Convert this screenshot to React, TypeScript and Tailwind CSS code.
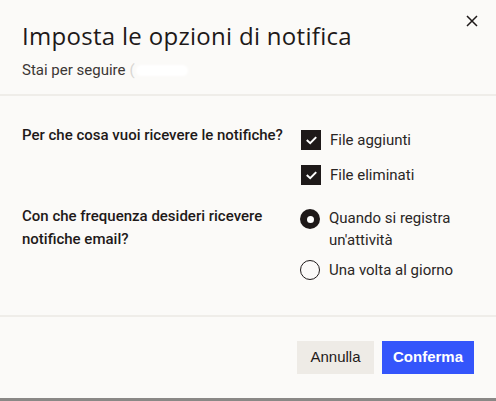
import React from "react";

function Check() {
  return (
    <span className="flex h-[20px] w-[20px] shrink-0 items-center justify-center bg-[#1e1919]">
      <svg width="11" height="9" viewBox="0 0 11 9" fill="none">
        <path d="M1.5 4.6L4.2 7.2L9.5 1.8" stroke="#ffffff" strokeWidth="2" strokeLinecap="square" />
      </svg>
    </span>
  );
}

export default function App() {
  return (
    <div className="w-[496px] h-[401px] bg-[#8a8886] overflow-hidden" style={{ fontFamily: '"Liberation Sans", Arial, sans-serif' }}>
      <div className="relative flex h-[398px] flex-col bg-[#fbfaf8] text-[#1e1919]">
        <button className="absolute right-[17px] top-[14px] flex h-[14px] w-[14px] items-center justify-center">
          <svg width="12" height="12" viewBox="0 0 12 12" fill="none">
            <path d="M1 1L11 11M11 1L1 11" stroke="#1e1919" strokeWidth="1.5" />
          </svg>
        </button>
        <div className="h-[96px] shrink-0 border-b-2 border-[#efede9] px-[22px] pt-[21px]">
          <h1 className="text-[24px] leading-[30px] tracking-[0.3px]" style={{ fontFamily: '"Open Sans", sans-serif' }}>
            Imposta le opzioni di notifica
          </h1>
          <div className="mt-[10px] flex items-center text-[15px] leading-[18px] text-[#3b3735]" style={{ fontFamily: 'Roboto, sans-serif' }}>
            <span>Stai per seguire</span>
            <span className="ml-[4px] text-[#d8d6d3]">(</span>
            <span className="ml-[1px] h-[11px] w-[52px] rounded-full bg-white blur-[1px]" />
          </div>
        </div>
        <div className="h-[221px] shrink-0 border-b-2 border-[#efede9] px-[22px] pt-[28px]" style={{ fontFamily: 'Roboto, sans-serif' }}>
          <div className="grid grid-cols-[278px_1fr]">
            <div className="text-[15px] font-medium leading-[22px]">Per che cosa vuoi ricevere le notifiche?</div>
            <div className="flex flex-col gap-[15px] pt-[6px] pl-[1px]">
              <label className="flex items-center gap-[9px] text-[15px] leading-[20px] text-[#2a2625]">
                <Check />
                <span>File aggiunti</span>
              </label>
              <label className="flex items-center gap-[9px] text-[15px] leading-[20px] text-[#2a2625]">
                <Check />
                <span>File eliminati</span>
              </label>
            </div>
          </div>
          <div className="mt-[20px] grid grid-cols-[278px_1fr]">
            <div className="text-[15px] font-medium leading-[23px]">
              Con che frequenza desideri ricevere
              <br />
              notifiche email?
            </div>
            <div className="flex flex-col gap-[8px] pt-[2px]">
              <label className="flex items-start gap-[9px] text-[15px] leading-[22px] text-[#2a2625]">
                <span className="mt-[2px] flex h-[20px] w-[20px] shrink-0 items-center justify-center rounded-full bg-[#1e1919]">
                  <span className="h-[7px] w-[7px] rounded-full bg-white" />
                </span>
                <span>
                  Quando si registra
                  <br />
                  un'attività
                </span>
              </label>
              <label className="flex items-center gap-[9px] text-[15px] leading-[22px] text-[#2a2625]">
                <span className="h-[20px] w-[20px] shrink-0 rounded-full border-[1.5px] border-[#1e1919]" />
                <span>Una volta al giorno</span>
              </label>
            </div>
          </div>
        </div>
        <div className="flex flex-1 items-start justify-end gap-[8px] px-[22px] pt-[24px]">
          <button className="h-[33px] w-[77px] bg-[#eeebe6] text-[15px] text-[#1e1919]">Annulla</button>
          <button className="h-[33px] w-[92px] bg-[#3455fb] text-[15px] font-bold text-white">Conferma</button>
        </div>
      </div>
    </div>
  );
}
